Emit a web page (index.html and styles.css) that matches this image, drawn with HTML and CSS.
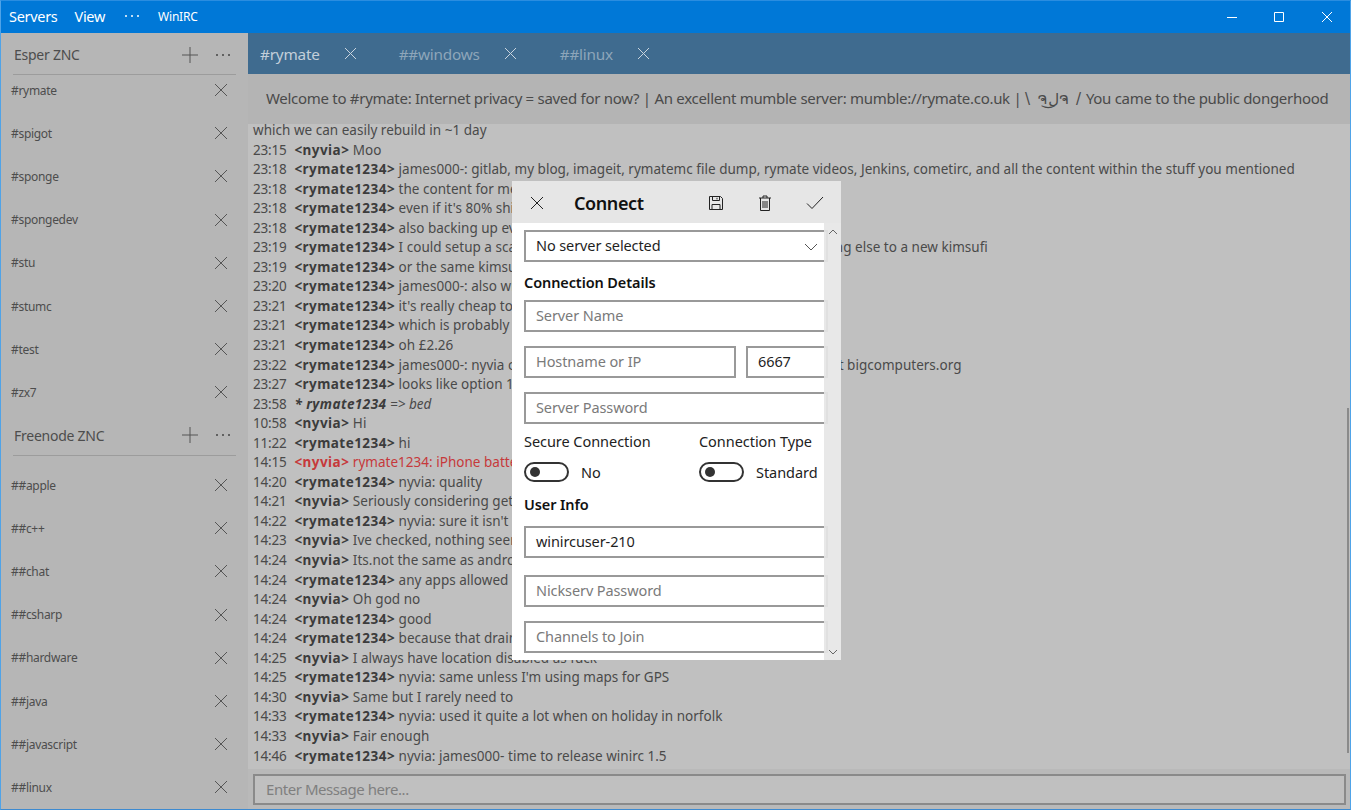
FILE: index.html
```html
<!DOCTYPE html>
<html lang="en">
<head>
<meta charset="utf-8">
<title>WinIRC</title>
<link rel="stylesheet" href="styles.css">
</head>
<body>
<div class="window">
  <header class="titlebar">
    <span class="menu">Servers</span>
    <span class="menu menu-view">View</span>
    <svg class="dots" width="16" height="4" viewBox="0 0 16 4"><circle cx="2" cy="2" r="1" /><circle cx="8" cy="2" r="1" /><circle cx="14" cy="2" r="1" /></svg>
    <span class="app-name">WinIRC</span>
    <div class="win-controls">
      <svg width="12" height="12" viewBox="0 0 12 12"><path d="M1 6.5h10" /></svg>
      <svg width="12" height="12" viewBox="0 0 12 12"><path d="M1.5 1.5h9v9h-9z" /></svg>
      <svg width="12" height="12" viewBox="0 0 12 12"><path d="M1 1l10 10M11 1L1 11" /></svg>
    </div>
  </header>
  <div class="main">
    <aside class="sidebar">
      <div class="server">
        <span class="server-name">Esper ZNC</span>
        <svg class="server-add" width="18" height="18" viewBox="0 0 18 18"><path d="M9 1v16M1 9h16" /></svg>
        <svg class="server-more" width="16" height="4" viewBox="0 0 16 4"><circle cx="2" cy="2" r="1" /><circle cx="8" cy="2" r="1" /><circle cx="14" cy="2" r="1" /></svg>
      </div>
      <div class="channels">
        <div class="channel"><span>#rymate</span><svg class="x" width="14" height="14" viewBox="0 0 14 14"><path d="M1 1l12 12M13 1L1 13" /></svg></div>
        <div class="channel"><span>#spigot</span><svg class="x" width="14" height="14" viewBox="0 0 14 14"><path d="M1 1l12 12M13 1L1 13" /></svg></div>
        <div class="channel"><span>#sponge</span><svg class="x" width="14" height="14" viewBox="0 0 14 14"><path d="M1 1l12 12M13 1L1 13" /></svg></div>
        <div class="channel"><span>#spongedev</span><svg class="x" width="14" height="14" viewBox="0 0 14 14"><path d="M1 1l12 12M13 1L1 13" /></svg></div>
        <div class="channel"><span>#stu</span><svg class="x" width="14" height="14" viewBox="0 0 14 14"><path d="M1 1l12 12M13 1L1 13" /></svg></div>
        <div class="channel"><span>#stumc</span><svg class="x" width="14" height="14" viewBox="0 0 14 14"><path d="M1 1l12 12M13 1L1 13" /></svg></div>
        <div class="channel"><span>#test</span><svg class="x" width="14" height="14" viewBox="0 0 14 14"><path d="M1 1l12 12M13 1L1 13" /></svg></div>
        <div class="channel"><span>#zx7</span><svg class="x" width="14" height="14" viewBox="0 0 14 14"><path d="M1 1l12 12M13 1L1 13" /></svg></div>
      </div>
      <div class="server server-second">
        <span class="server-name">Freenode ZNC</span>
        <svg class="server-add" width="18" height="18" viewBox="0 0 18 18"><path d="M9 1v16M1 9h16" /></svg>
        <svg class="server-more" width="16" height="4" viewBox="0 0 16 4"><circle cx="2" cy="2" r="1" /><circle cx="8" cy="2" r="1" /><circle cx="14" cy="2" r="1" /></svg>
      </div>
      <div class="channels channels-second">
        <div class="channel"><span>##apple</span><svg class="x" width="14" height="14" viewBox="0 0 14 14"><path d="M1 1l12 12M13 1L1 13" /></svg></div>
        <div class="channel"><span>##c++</span><svg class="x" width="14" height="14" viewBox="0 0 14 14"><path d="M1 1l12 12M13 1L1 13" /></svg></div>
        <div class="channel"><span>##chat</span><svg class="x" width="14" height="14" viewBox="0 0 14 14"><path d="M1 1l12 12M13 1L1 13" /></svg></div>
        <div class="channel"><span>##csharp</span><svg class="x" width="14" height="14" viewBox="0 0 14 14"><path d="M1 1l12 12M13 1L1 13" /></svg></div>
        <div class="channel"><span>##hardware</span><svg class="x" width="14" height="14" viewBox="0 0 14 14"><path d="M1 1l12 12M13 1L1 13" /></svg></div>
        <div class="channel"><span>##java</span><svg class="x" width="14" height="14" viewBox="0 0 14 14"><path d="M1 1l12 12M13 1L1 13" /></svg></div>
        <div class="channel"><span>##javascript</span><svg class="x" width="14" height="14" viewBox="0 0 14 14"><path d="M1 1l12 12M13 1L1 13" /></svg></div>
        <div class="channel"><span>##linux</span><svg class="x" width="14" height="14" viewBox="0 0 14 14"><path d="M1 1l12 12M13 1L1 13" /></svg></div>
      </div>
    </aside>
    <section class="content">
      <nav class="tabs">
        <div class="tab tab-active"><span class="tab-label">#rymate</span><svg width="13" height="13" viewBox="0 0 13 13"><path d="M1 1l11 11M12 1L1 12" /></svg></div>
        <div class="tab"><span class="tab-label">##windows</span><svg width="13" height="13" viewBox="0 0 13 13"><path d="M1 1l11 11M12 1L1 12" /></svg></div>
        <div class="tab"><span class="tab-label">##linux</span><svg width="13" height="13" viewBox="0 0 13 13"><path d="M1 1l11 11M12 1L1 12" /></svg></div>
      </nav>
      <div class="topic">Welcome to #rymate: Internet privacy = saved for now? | An excellent mumble server: mumble://rymate.co.uk | <span class="donger">\ ຈل͜ຈ /</span> You came to the public dongerhood</div>
      <div class="chat">
        <div class="log">
          <div class="line cont">which we can easily rebuild in ~1 day</div>
          <div class="line"><span class="t">23:15</span><b>&lt;nyvia&gt;</b> Moo</div>
          <div class="line"><span class="t">23:18</span><b>&lt;rymate1234&gt;</b> james000-: gitlab, my blog, imageit, rymatemc file dump, rymate videos, Jenkins, cometirc, and all the content within the stuff you mentioned</div>
          <div class="line"><span class="t">23:18</span><b>&lt;rymate1234&gt;</b> the content for me is the most important</div>
          <div class="line"><span class="t">23:18</span><b>&lt;rymate1234&gt;</b> even if it's 80% shit</div>
          <div class="line"><span class="t">23:18</span><b>&lt;rymate1234&gt;</b> also backing up everything</div>
          <div class="line"><span class="t">23:19</span><b>&lt;rymate1234&gt;</b> I could setup a scaleway server for all of that stuff and move everything else to a new kimsufi</div>
          <div class="line"><span class="t">23:19</span><b>&lt;rymate1234&gt;</b> or the same kimsufi</div>
          <div class="line"><span class="t">23:20</span><b>&lt;rymate1234&gt;</b> james000-: also what</div>
          <div class="line"><span class="t">23:21</span><b>&lt;rymate1234&gt;</b> it's really cheap too</div>
          <div class="line"><span class="t">23:21</span><b>&lt;rymate1234&gt;</b> which is probably good</div>
          <div class="line"><span class="t">23:21</span><b>&lt;rymate1234&gt;</b> oh £2.26</div>
          <div class="line"><span class="t">23:22</span><b>&lt;rymate1234&gt;</b> james000-: nyvia check out all the great offers over on the main site at bigcomputers.org</div>
          <div class="line"><span class="t">23:27</span><b>&lt;rymate1234&gt;</b> looks like option 1</div>
          <div class="line"><span class="t">23:58</span><b class="action">* rymate1234</b> <i>=&gt; bed</i></div>
          <div class="line"><span class="t">10:58</span><b>&lt;nyvia&gt;</b> Hi</div>
          <div class="line"><span class="t">11:22</span><b>&lt;rymate1234&gt;</b> hi</div>
          <div class="line"><span class="t">14:15</span><span class="mention"><b>&lt;nyvia&gt;</b> rymate1234: iPhone battery</span></div>
          <div class="line"><span class="t">14:20</span><b>&lt;rymate1234&gt;</b> nyvia: quality</div>
          <div class="line"><span class="t">14:21</span><b>&lt;nyvia&gt;</b> Seriously considering getting</div>
          <div class="line"><span class="t">14:22</span><b>&lt;rymate1234&gt;</b> nyvia: sure it isn't</div>
          <div class="line"><span class="t">14:23</span><b>&lt;nyvia&gt;</b> Ive checked, nothing seems</div>
          <div class="line"><span class="t">14:24</span><b>&lt;nyvia&gt;</b> Its.not the same as android</div>
          <div class="line"><span class="t">14:24</span><b>&lt;rymate1234&gt;</b> any apps allowed</div>
          <div class="line"><span class="t">14:24</span><b>&lt;nyvia&gt;</b> Oh god no</div>
          <div class="line"><span class="t">14:24</span><b>&lt;rymate1234&gt;</b> good</div>
          <div class="line"><span class="t">14:24</span><b>&lt;rymate1234&gt;</b> because that drains</div>
          <div class="line"><span class="t">14:25</span><b>&lt;nyvia&gt;</b> I always have location disabled as fuck</div>
          <div class="line"><span class="t">14:25</span><b>&lt;rymate1234&gt;</b> nyvia: same unless I'm using maps for GPS</div>
          <div class="line"><span class="t">14:30</span><b>&lt;nyvia&gt;</b> Same but I rarely need to</div>
          <div class="line"><span class="t">14:33</span><b>&lt;rymate1234&gt;</b> nyvia: used it quite a lot when on holiday in norfolk</div>
          <div class="line"><span class="t">14:33</span><b>&lt;nyvia&gt;</b> Fair enough</div>
          <div class="line"><span class="t">14:46</span><b>&lt;rymate1234&gt;</b> nyvia: james000- time to release winirc 1.5</div>
        </div>
        <div class="scrollbar"></div>
      </div>
      <div class="composer"><div class="composer-box">Enter Message here...</div></div>
    </section>
  </div>

  <div class="dialog">
    <div class="dialog-head">
      <svg class="head-close" width="14" height="14" viewBox="0 0 14 14"><path d="M1 1l12 12M13 1L1 13" /></svg>
      <span class="dialog-title">Connect</span>
      <svg class="head-save" width="16" height="16" viewBox="0 0 16 16"><path d="M1.500 1.500h11l2 2v11h-13zM4.500 1.500v4h7v-4M4 14.500v-5h8v5M9 2.800v1.600" /></svg>
      <svg class="head-trash" width="14" height="16" viewBox="0 0 14 16"><path d="M1 3h12M5 3V1h4v2M2.500 3v12.500h9V3M5 6v7M7 6v7M9 6v7" /></svg>
      <svg class="head-check" width="18" height="14" viewBox="0 0 18 14"><path d="M1 7.500l5 5L17 1" /></svg>
    </div>
    <div class="dialog-body">
      <div class="field select"><span>No server selected</span><svg width="14" height="8" viewBox="0 0 14 8"><path d="M1 1l6 6 6-6" /></svg></div>
      <div class="heading h-connection">Connection Details</div>
      <div class="field placeholder f-name">Server Name</div>
      <div class="host-row">
        <div class="field placeholder f-host">Hostname or IP</div>
        <div class="field f-port">6667</div>
      </div>
      <div class="field placeholder f-pass">Server Password</div>
      <div class="toggles">
        <div class="toggle-col col-secure">
          <div class="toggle-label">Secure Connection</div>
          <div class="toggle-row"><span class="switch"></span><span>No</span></div>
        </div>
        <div class="toggle-col">
          <div class="toggle-label">Connection Type</div>
          <div class="toggle-row"><span class="switch"></span><span>Standard</span></div>
        </div>
      </div>
      <div class="heading h-user">User Info</div>
      <div class="field f-user">winircuser-210</div>
      <div class="field placeholder f-nick">Nickserv Password</div>
      <div class="field placeholder f-join">Channels to Join</div>
    </div>
    <div class="dialog-scroll">
      <svg width="10" height="6" viewBox="0 0 10 6"><path d="M1 5l4-4 4 4" /></svg>
      <svg width="10" height="6" viewBox="0 0 10 6"><path d="M1 1l4 4 4-4" /></svg>
    </div>
  </div>
</div>
</body>
</html>
```
FILE: styles.css
```css
* { box-sizing: border-box; }
html, body { margin: 0; height: 100%; overflow: hidden; }
body { font-family: "Noto Sans", "Open Sans", sans-serif; color: #444; }
svg { fill: none; stroke: currentColor; stroke-width: 1; display: block; flex: none; }

.window {
  position: relative;
  width: 1351px;
  height: 810px;
  border: 1px solid #4fa3e8;
  border-top-color: #2a8de0;
  border-bottom-color: #3d8ad0;
  display: flex;
  flex-direction: column;
  overflow: hidden;
}

.titlebar {
  height: 32px;
  flex: none;
  background: #0078d7;
  color: #fff;
  display: flex;
  align-items: center;
  padding-left: 8px;
  padding-bottom: 2px;
}
.menu { font-size: 14.5px; letter-spacing: -0.3px; }
.menu-view { margin-left: 17px; }
.titlebar .dots { margin-left: 19px; }
.titlebar .dots circle { fill: #fff; stroke: none; }
.app-name { font-size: 12px; margin-left: 18px; letter-spacing: -0.2px; }
.win-controls { margin-left: auto; display: flex; gap: 35.5px; padding-right: 17.5px; padding-top: 2px; }
.win-controls svg { color: #fff; }

.main { flex: 1; display: flex; min-height: 0; }

.sidebar {
  width: 247px;
  flex: none;
  background: #b6b6b6;
  overflow: hidden;
  color: #4d4d4d;
}
.server {
  height: 42px;
  margin: 0 12px;
  width: 223px;
  border-bottom: 1px solid #9c9c9c;
  display: flex;
  align-items: center;
  padding-left: 1px;
  padding-top: 2px;
}
.server-second { height: 35px; padding-top: 0; padding-bottom: 5px; }
.server-name { font-size: 14px; letter-spacing: -0.25px; flex: 1; }
.server-add { color: #555; }
.server-more { margin-left: 16px; margin-right: 5px; }
.server-more circle { fill: #444; stroke: none; }
.channels-second { padding-top: 14.5px; }
.channel {
  height: 43.2px;
  display: flex;
  align-items: center;
  justify-content: space-between;
  padding: 0 20px 13px 10px;
  font-size: 12px;
  letter-spacing: -0.3px;
}
.channel .x { color: #555; }

.content { flex: 1; display: flex; flex-direction: column; min-width: 0; }

.tabs {
  height: 41px;
  flex: none;
  background: #3f6b8f;
  display: flex;
  align-items: center;
  color: #8ea6ba;
}
.tab { display: flex; align-items: center; padding-left: 12px; margin-right: 30px; }
.tab svg { margin-left: 24px; color: #c9d4de; }
.tab-label { font-size: 15.3px; letter-spacing: -0.2px; }
.tab-active .tab-label { color: #c3cfda; }
.tab + .tab { padding-left: 12px; margin-right: 31px; }

.topic {
  height: 50px;
  flex: none;
  background: #b4b4b4;
  padding: 14px 0 0 18px;
  font-size: 15px;
  letter-spacing: -0.29px;
  white-space: nowrap;
  color: #4a4a4a;
}
.donger { font-family: "DejaVu Sans", sans-serif; letter-spacing: 1.3px; }

.chat {
  position: relative;
  flex: 1;
  min-height: 0;
  background: #c0c0c0;
  overflow: hidden;
}
.log { margin-top: -3px; padding-left: 5px; }
.line {
  height: 19.56px;
  line-height: 19.56px;
  font-size: 13.5px;
  letter-spacing: 0.02px;
  white-space: nowrap;
  color: #4a4a4a;
}
.line b { font-weight: 700; color: #3c3c3c; letter-spacing: 0.45px; }
.line i { font-style: italic; }
.t { margin-right: 8px; letter-spacing: -0.22px; }
.action { font-style: italic; }
.mention, .mention b { color: #c6393b; }
.scrollbar {
  position: absolute;
  right: 1px;
  top: 284px;
  width: 2px;
  height: 345px;
  background: #8a8a8a;
}

.composer {
  height: 40px;
  flex: none;
  background: #b9b9b9;
  padding: 5px 4px 4px 5px;
}
.composer-box {
  height: 31px;
  border: 2px solid #8a8a8a;
  background: #c0c0c0;
  padding-left: 11px;
  font-size: 15px;
  line-height: 26px;
  letter-spacing: -0.45px;
  color: #7f7f7f;
}

.dialog {
  position: absolute;
  left: 511px;
  top: 180px;
  width: 329px;
  height: 479px;
  background: #fff;
  overflow: hidden;
  color: #222;
}
.dialog-head {
  height: 42px;
  background: #e6e6e6;
  display: flex;
  align-items: center;
  padding: 2px 0 0 18px;
  color: #222;
}
.dialog-title { font-size: 18px; font-weight: 600; letter-spacing: -0.4px; margin-left: 30px; width: 134px; color: #111; }
.head-trash { margin-left: 34px; }
.head-check { margin-left: 34px; }
.dialog-body { padding: 7px 0 0 12px; width: 316px; }
.field {
  height: 32px;
  width: 304px;
  background: #fff;
  border: 2px solid #999;
  padding-left: 10px;
  font-size: 14.5px;
  line-height: 27px;
  letter-spacing: -0.1px;
  color: #1f1f1f;
}
.placeholder { color: #7a7a7a; }
.select { position: relative; }
.select svg { position: absolute; right: 8px; top: 11px; color: #555; }
.heading { font-size: 14.5px; font-weight: 600; letter-spacing: -0.1px; color: #111; line-height: 20px; }
.h-connection { margin-top: 10px; }
.f-name { margin-top: 8px; }
.host-row { display: flex; gap: 10px; margin-top: 14px; width: 304px; }
.f-host { width: 212px; }
.f-port { flex: 1; width: auto; }
.f-pass { margin-top: 14px; }
.toggles { display: flex; margin-top: 7px; }
.toggle-col { font-size: 14.5px; letter-spacing: -0.05px; color: #222; }
.col-secure { width: 175px; }
.toggle-label { line-height: 20px; }
.toggle-row { display: flex; align-items: center; gap: 12px; margin-top: 11px; height: 20px; white-space: nowrap; }
.switch {
  position: relative;
  width: 45px;
  height: 20px;
  border: 2px solid #333;
  border-radius: 10px;
  flex: none;
}
.switch::after {
  content: "";
  position: absolute;
  left: 4px;
  top: 3px;
  width: 10px;
  height: 10px;
  border-radius: 50%;
  background: #333;
}
.h-user { margin-top: 12px; }
.f-user { margin-top: 12px; }
.f-nick { margin-top: 17px; }
.f-join { margin-top: 14px; }
.dialog-scroll {
  position: absolute;
  right: 0;
  top: 42px;
  bottom: 0;
  width: 17px;
  background: rgba(230, 230, 230, 0.92);
  display: flex;
  flex-direction: column;
  justify-content: space-between;
  align-items: center;
  padding: 6px 0 5px;
  color: #666;
}
```
